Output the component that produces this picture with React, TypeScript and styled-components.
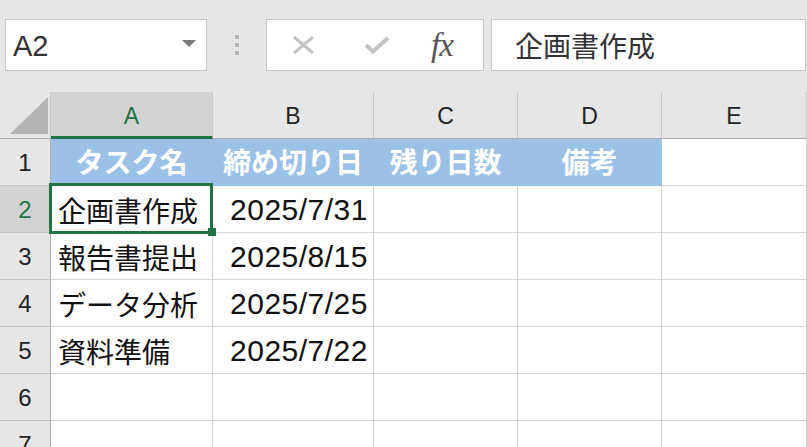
import React from 'react';
import styled, { createGlobalStyle, css } from 'styled-components';

const FONT = `"Liberation Sans", "Noto Sans CJK JP", sans-serif`;
const GREEN = '#217346';

const GlobalStyle = createGlobalStyle`
  html, body {
    margin: 0;
    padding: 0;
    background: #e6e6e6;
    font-family: ${FONT};
    overflow: hidden;
  }
`;

const Page = styled.div`
  width: 807px;
  height: 447px;
  overflow: hidden;
  background: #e6e6e6;
`;

const Toolbar = styled.div`
  display: flex;
  align-items: center;
  height: 92px;
  padding: 0 1px 2px 5px;
  box-sizing: border-box;
`;

const NameBox = styled.div`
  position: relative;
  display: flex;
  align-items: center;
  width: 202px;
  height: 52px;
  box-sizing: border-box;
  border: 1px solid #c6c6c6;
  background: #fff;
  padding: 2px 0 0 7px;
  font-size: 29px;
  color: #333;
`;

const Caret = styled.div`
  position: absolute;
  right: 10px;
  top: 20px;
  width: 0;
  height: 0;
  border-left: 7px solid transparent;
  border-right: 7px solid transparent;
  border-top: 7px solid #7a7a7a;
`;

const Grip = styled.div`
  display: flex;
  flex-direction: column;
  gap: 4px;
  margin: 0 27px 0 28px;
`;

const GripDot = styled.span`
  width: 4px;
  height: 4px;
  background: #b5b5b5;
`;

const FxButtons = styled.div`
  display: flex;
  align-items: center;
  width: 218px;
  height: 52px;
  box-sizing: border-box;
  border: 1px solid #c6c6c6;
  background: #fff;
  padding-left: 25px;
`;

const IconSlot = styled.div<{ $w: number }>`
  width: ${(p) => p.$w}px;
  display: flex;
  align-items: center;
`;

const FxLabel = styled.span`
  font-family: "Liberation Serif", serif;
  font-style: italic;
  font-size: 33px;
  color: #555;
  letter-spacing: -1px;
  margin-left: -3px;
`;

const FormulaBar = styled.div`
  flex: 1;
  display: flex;
  align-items: center;
  height: 52px;
  margin-left: 7px;
  box-sizing: border-box;
  border: 1px solid #c6c6c6;
  background: #fff;
  padding-left: 23px;
  font-size: 28px;
  color: #333;
`;

const Sheet = styled.div`
  display: grid;
  grid-template-columns: 51px 162px 161px 144px 144px 1fr;
  grid-auto-rows: 47px;
  background: #fff;
  position: relative;
`;

const Corner = styled.div`
  position: relative;
  background: #e6e6e6;
  border-right: 1px solid #c6c6c6;
  border-bottom: 1px solid #ababab;
  box-sizing: border-box;
`;

const CornerTriangle = styled.div`
  position: absolute;
  right: 2px;
  bottom: 4px;
  width: 0;
  height: 0;
  border-left: 38px solid transparent;
  border-bottom: 37px solid #b4b4b4;
`;

const ColHead = styled.div<{ $selected?: boolean }>`
  display: flex;
  align-items: center;
  justify-content: center;
  box-sizing: border-box;
  font-size: 23px;
  background: #e6e6e6;
  color: #222;
  border-right: 1px solid #c6c6c6;
  border-bottom: 1px solid #ababab;
  padding-top: 2px;
  ${(p) =>
    p.$selected &&
    css`
      background: #d2d2d2;
      color: ${GREEN};
      border-bottom: 3px solid ${GREEN};
      padding-top: 4px;
    `}
`;

const RowHead = styled.div<{ $selected?: boolean }>`
  display: flex;
  align-items: center;
  justify-content: center;
  box-sizing: border-box;
  font-size: 24px;
  background: #e6e6e6;
  color: #222;
  border-right: 1px solid #ababab;
  border-bottom: 1px solid #c6c6c6;
  padding-top: 2px;
  ${(p) =>
    p.$selected &&
    css`
      background: #d2d2d2;
      color: ${GREEN};
    `}
`;

const Cell = styled.div<{ $align?: 'left' | 'right' | 'center'; $header?: boolean }>`
  display: flex;
  align-items: center;
  box-sizing: border-box;
  border-right: 1px solid #d4d4d4;
  border-bottom: 1px solid #d4d4d4;
  white-space: nowrap;
  overflow: hidden;
  font-size: 28px;
  color: #111;
  padding: 2px 5px 0 7px;
  justify-content: ${(p) =>
    p.$align === 'right' ? 'flex-end' : p.$align === 'center' ? 'center' : 'flex-start'};
  ${(p) =>
    p.$header &&
    css`
      background: #9bc2e6;
      color: #fff;
      font-weight: 700;
      border-right-color: #9bc2e6;
      border-bottom-color: #9bc2e6;
      padding: 0 0 2px 0;
    `}
`;

const DateText = styled.span`
  font-size: 30px;
  letter-spacing: 0.5px;
`;

const Selection = styled.div`
  position: absolute;
  left: 49px;
  top: 91px;
  width: 164px;
  height: 51px;
  box-sizing: border-box;
  border: 3px solid ${GREEN};
  pointer-events: none;
`;

const FillHandle = styled.div`
  position: absolute;
  right: -6px;
  bottom: -5px;
  width: 8px;
  height: 8px;
  background: ${GREEN};
`;

const columns = ['A', 'B', 'C', 'D', 'E'];
const headers = ['タスク名', '締め切り日', '残り日数', '備考'];
const rows = [
  { task: '企画書作成', date: '2025/7/31' },
  { task: '報告書提出', date: '2025/8/15' },
  { task: 'データ分析', date: '2025/7/25' },
  { task: '資料準備', date: '2025/7/22' },
];

export default function App() {
  return (
    <Page>
      <GlobalStyle />
      <Toolbar>
        <NameBox>
          A2
          <Caret />
        </NameBox>
        <Grip>
          <GripDot />
          <GripDot />
          <GripDot />
        </Grip>
        <FxButtons>
          <IconSlot $w={72}>
            <svg width="24" height="20" viewBox="0 0 24 20">
              <path d="M2 2 L21 18 M21 2 L2 18" stroke="#c4c4c4" strokeWidth="3" fill="none" />
            </svg>
          </IconSlot>
          <IconSlot $w={70}>
            <svg width="26" height="18" viewBox="0 0 26 18">
              <path d="M2 9 L9 15.5 L24 2" stroke="#c4c4c4" strokeWidth="4" fill="none" />
            </svg>
          </IconSlot>
          <FxLabel>fx</FxLabel>
        </FxButtons>
        <FormulaBar>企画書作成</FormulaBar>
      </Toolbar>

      <Sheet>
        <Corner>
          <CornerTriangle />
        </Corner>
        {columns.map((c) => (
          <ColHead key={c} $selected={c === 'A'}>
            {c}
          </ColHead>
        ))}

        <RowHead>1</RowHead>
        {headers.map((h) => (
          <Cell key={h} $header $align="center">
            {h}
          </Cell>
        ))}
        <Cell />

        {rows.map((r, i) => (
          <React.Fragment key={r.task}>
            <RowHead $selected={i === 0}>{i + 2}</RowHead>
            <Cell>{r.task}</Cell>
            <Cell $align="right">
              <DateText>{r.date}</DateText>
            </Cell>
            <Cell />
            <Cell />
            <Cell />
          </React.Fragment>
        ))}

        {[6, 7].map((n) => (
          <React.Fragment key={n}>
            <RowHead>{n}</RowHead>
            <Cell />
            <Cell />
            <Cell />
            <Cell />
            <Cell />
          </React.Fragment>
        ))}

        <Selection>
          <FillHandle />
        </Selection>
      </Sheet>
    </Page>
  );
}
